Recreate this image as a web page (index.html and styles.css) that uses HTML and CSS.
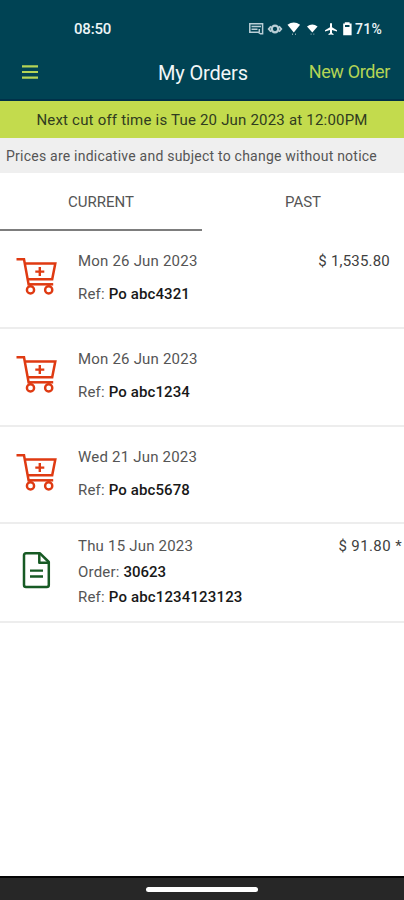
FILE: index.html
```html
<!DOCTYPE html>
<html lang="en">
<head>
<meta charset="utf-8">
<meta name="viewport" content="width=device-width, initial-scale=1">
<title>My Orders</title>
<link rel="stylesheet" href="styles.css">
</head>
<body>
<svg class="defs" width="0" height="0" aria-hidden="true">
  <symbol id="cart" viewBox="0 0 42 40">
    <g fill="none" stroke="#df3a12" stroke-width="2.5">
      <path d="M.5 3.300H8L12.800 29.500"/>
      <path d="M9.300 7.400H39.300L36.200 23.200H11.800"/>
      <path d="M12.600 28.300H37.200"/>
      <circle cx="14.500" cy="33.900" r="3.600" stroke-width="2.400"/>
      <circle cx="32.700" cy="33.900" r="3.600" stroke-width="2.400"/>
      <path d="M19.300 15.600h9M23.800 11.100v9" stroke-width="2.400"/>
    </g>
  </symbol>
</svg>
<div class="screen">
  <header class="top">
    <div class="status">
      <span class="clock">08:50</span>
      <svg class="status-icons" width="104" height="16" viewBox="0 0 104 16">
        <g fill="none" stroke="#b9ced6" stroke-width="1.500">
          <path d="M.800 2.800h12.800v10H11.500l-2-1.500H.800z"/>
          <path d="M2.500 5.500h9.500M2.500 8.300h6M10.300 8v3" stroke-width="1.500"/>
          <circle cx="26" cy="8" r="3.300" stroke-width="2.300"/>
          <path d="M22 5.200 19.700 8 22 10.800M30 5.200 32.300 8 30 10.800" stroke-width="1.800"/>
        </g>
        <g fill="#fff">
          <path d="M38.500 3.800Q44.800-.8 51.100 3.800L44.800 11.500z"/>
          <path d="M58 5.500Q63.300 1.700 68.600 5.500L63.300 11.500z"/>
          <path d="M43 12.500h1v1.500h-1zM46 12.500h1v1.500h-1zM61.600 12.500h1v1.200h-1zM64.300 12.500h1v1.200h-1z" opacity=".5"/>
          <path d="M81 2.600q1-1.300 2 0v3.600l5 3v1.300l-5-1.400v3l1.500 1v1L82 13.500l-2.500.6v-1l1.500-1v-3l-5 1.400V9.200l5-3z"/>
          <path fill-rule="evenodd" d="M95.800 1.200h4.800V2.500h2v11.800h-8.400V2.500h1.600zM96 4v2h4.500v-2z"/>
        </g>
      </svg>
      <span class="battery">71%</span>
    </div>
    <div class="bar">
      <svg class="menu" width="16" height="14" viewBox="0 0 16 14"><path d="M0 1.300h16M0 7h16M0 12.700h16" stroke="#b4d455" stroke-width="2.200"/></svg>
      <h1 class="title">My Orders</h1>
      <a class="new">New Order</a>
    </div>
  </header>
  <div class="cutoff"><span>Next cut off time is Tue 20 Jun 2023 at 12:00PM</span></div>
  <div class="notice"><span>Prices are indicative and subject to change without notice</span></div>
  <nav class="tabs">
    <a class="tab active">CURRENT</a>
    <a class="tab">PAST</a>
  </nav>
  <main class="orders">
    <section class="order">
      <svg class="icon" width="42" height="40"><use href="#cart"/></svg>
      <div class="info"><p>Mon 26 Jun 2023</p><p>Ref: <b>Po abc4321</b></p></div>
      <span class="price large">$ 1,535.80</span>
    </section>
    <section class="order">
      <svg class="icon" width="42" height="40"><use href="#cart"/></svg>
      <div class="info"><p>Mon 26 Jun 2023</p><p>Ref: <b>Po abc1234</b></p></div>
    </section>
    <section class="order">
      <svg class="icon" width="42" height="40"><use href="#cart"/></svg>
      <div class="info"><p>Wed 21 Jun 2023</p><p>Ref: <b>Po abc5678</b></p></div>
    </section>
    <section class="order placed">
      <svg class="icon" width="42" height="40" viewBox="0 0 42 40">
        <g fill="none" stroke="#175a24" stroke-width="2.500" stroke-linejoin="round">
          <path d="M10 3.300H24L32.800 12V35Q32.800 37 30.800 37H10Q8 37 8 35V5.300Q8 3.300 10 3.300z"/>
          <path d="M23.300 3.500V12.700H32.500"/>
          <path d="M14 20.700H27M14 26.500H27" stroke-width="2.300"/>
        </g>
      </svg>
      <div class="info"><p>Thu 15 Jun 2023</p><p class="number">Order: <b>30623</b></p><p class="long">Ref: <b>Po abc1234123123</b></p></div>
      <span class="price starred">$ 91.80 *</span>
    </section>
  </main>
  <footer class="navbar"><i class="handle"></i></footer>
</div>
</body>
</html>
```

FILE: styles.css
```css
* { box-sizing: border-box; }
body {
  margin: 0;
  font-family: Roboto, "Liberation Sans", sans-serif;
  font-size: 15px;
  color: #555;
  background: #fff;
}
.defs { display: block; }
.screen { display: flex; flex-direction: column; height: 900px; overflow: hidden; }
.top { height: 101px; background: #004354; border-bottom: 2px solid #003149; }
.status { display: flex; align-items: center; height: 57px; padding: 0 21px 0 74px; color: #edf5f7; font-weight: 500; }
.clock { font-size: 15px; letter-spacing: -.2px; }
.status-icons { margin-left: auto; }
.battery { width: 28px; margin-left: 2px; font-size: 14px; letter-spacing: .3px; white-space: nowrap; }
.bar { display: grid; grid-template-columns: 136px 1fr 136px; align-items: center; height: 30px; padding: 0 14px 0 22px; }
.title { margin: 1px 0 0; font-size: 20px; font-weight: 400; letter-spacing: -.15px; color: #f2f7f8; white-space: nowrap; }
.new { justify-self: end; margin-top: -2px; font-size: 18px; letter-spacing: -.35px; color: #b4d455; white-space: nowrap; }
.cutoff { display: flex; align-items: center; justify-content: center; height: 37px; padding-top: 1px; background: #c3db4d; color: #303c20; letter-spacing: .2px; white-space: nowrap; }
.notice { display: flex; align-items: center; height: 35px; padding: 1px 0 0 6px; background: #efefef; font-size: 14px; letter-spacing: .23px; white-space: nowrap; }
.tabs { display: flex; height: 58px; }
.tab { flex: 1; height: 58px; line-height: 59px; text-align: center; border-bottom: 2px solid transparent; }
.tab.active { border-color: #7d7d7d; }
.order { display: flex; height: 97.800px; padding: 20px 14px 0 16px; border-bottom: 2px solid #ededed; }
.icon { flex: none; margin-top: 5px; }
.info { margin-left: 20px; letter-spacing: .2px; white-space: nowrap; }
.info p { height: 33px; margin: 0; line-height: 20px; }
.info b { font-weight: 500; color: #181818; letter-spacing: .1px; }
.info .number b { letter-spacing: -.05px; }
.info .long b { letter-spacing: .15px; }
.price { margin-left: auto; line-height: 20px; color: #404040; white-space: nowrap; }
.large { letter-spacing: .2px; }
.placed { padding: 12px 2px 0 16px; height: 99px; }
.placed .info p { height: 25.300px; }
.placed .icon { margin-top: 14px; }
.starred { letter-spacing: .4px; }
.navbar { display: flex; justify-content: center; height: 24px; margin-top: auto; padding-top: 9px; background: #272727; border-top: 2px solid #050505; }
.handle { width: 112px; height: 5px; border-radius: 3px; background: #fff; }
```
